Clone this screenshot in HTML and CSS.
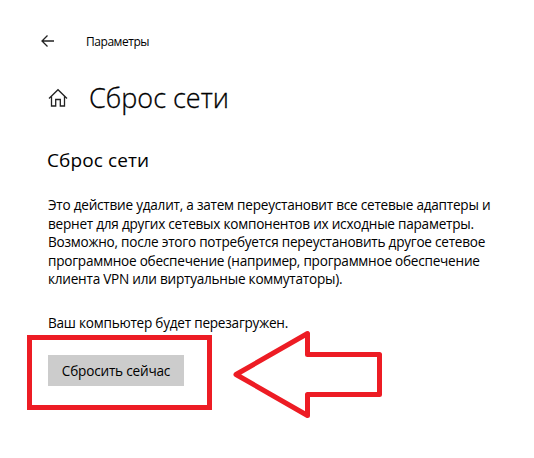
FILE: index.html
```
<!DOCTYPE html>
<html lang="ru">
<head>
  <meta charset="UTF-8">
  <meta name="viewport" content="width=device-width, initial-scale=1.0">
  <title>Сброс сети</title>
  <link rel="stylesheet" href="styles.css">
</head>
<body>
  <header class="topbar">
    <svg class="back" width="14" height="12" viewBox="0 0 14 12">
      <path d="M6.500 .5 1 6l5.500 5.500M1 6h12"/>
    </svg>
    <span class="app-name">Параметры</span>
  </header>

  <div class="page-title">
    <svg class="home" width="20" height="20" viewBox="0 0 20 20">
      <path d="M1 10.500 10 1.700l9 8.800M3.500 8.500v9.500h4.200v-6.500h4.600V18h4.200V8.500"/>
    </svg>
    <h1>Сброс сети</h1>
  </div>

  <main class="content">
    <h2>Сброс сети</h2>
    <p class="description">Это действие удалит, а затем переустановит все сетевые адаптеры и<br>
      вернет для других сетевых компонентов их исходные параметры.<br>
      Возможно, после этого потребуется переустановить другое сетевое<br>
      программное обеспечение (например, программное обеспечение<br>
      клиента VPN или виртуальные коммутаторы).</p>
    <p class="warning">Ваш компьютер будет перезагружен.</p>
  </main>

  <div class="action">
    <div class="highlight">
      <button class="reset-btn" type="button">Сбросить сейчас</button>
    </div>
    <svg class="arrow" width="152" height="92" viewBox="0 0 152 92">
      <path d="M5 44.500 76.500 3.500v21h72v40h-72v21z"/>
    </svg>
  </div>
</body>
</html>
```

FILE: styles.css
```
body {
  margin: 0;
  background: #fff;
  color: #000;
  font-family: "Open Sans", "Noto Sans", sans-serif;
  font-size: 13.6px;
}
h1, h2, p {
  margin: 0;
  font-weight: 400;
}
.topbar {
  display: flex;
  align-items: center;
  gap: 31px;
  padding: 31px 0 0 41px;
  height: 20px;
}
.back, .home, .arrow {
  fill: none;
  stroke: #222;
  stroke-width: 1.3;
}
.app-name {
  font-size: 12px;
  letter-spacing: -0.45px;
}
.page-title {
  display: flex;
  align-items: center;
  gap: 21px;
  padding: 27px 0 0 48px;
  height: 40px;
}
h1 {
  font-size: 27px;
  font-weight: 300;
  line-height: 40px;
  -webkit-text-stroke: 0.3px #000;
}
.content {
  padding: 28px 0 0 48px;
  height: 189px;
}
h2 {
  margin-left: -1px;
  font-size: 19px;
  letter-spacing: 0.1px;
  line-height: 28px;
}
.description {
  margin-top: 22px;
  line-height: 18.600px;
  letter-spacing: -0.24px;
  white-space: nowrap;
}
.warning {
  margin-top: 25px;
  line-height: 18.600px;
  letter-spacing: -0.24px;
}
.action {
  display: flex;
  align-items: flex-start;
  gap: 19px;
  padding-left: 27px;
}
.highlight {
  box-sizing: border-box;
  width: 185px;
  height: 75px;
  padding: 15px 16px;
  border: 5px solid #ed1c24;
}
.reset-btn {
  display: block;
  width: 136px;
  height: 31px;
  padding: 0;
  border: none;
  background: #ccc;
  color: #000;
  font: inherit;
  letter-spacing: -0.2px;
}
.arrow {
  margin-top: -5px;
  stroke: #ed1c24;
  stroke-width: 5;
  stroke-linejoin: round;
}
```
